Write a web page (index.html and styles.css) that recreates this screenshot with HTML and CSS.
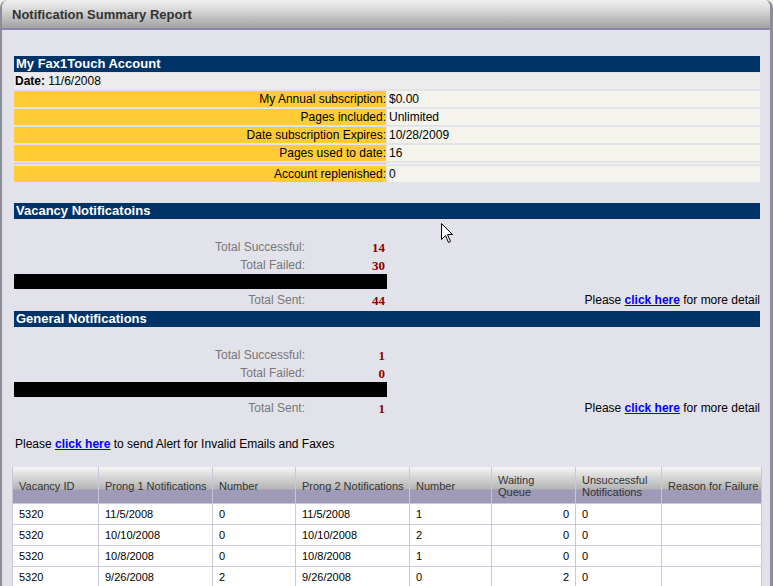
FILE: index.html
```html
<!DOCTYPE html>
<html>
    <head>
        <link rel="stylesheet" href="styles.css">
    </head>
    <body>

    <div class="window">
        <div class="window-title">Notification Summary Report</div>
        <div class="window-body">

            <div class="section-bar">My Fax1Touch Account</div>
            <div class="date-row"><b>Date:</b> 11/6/2008</div>
            <div class="acct">
                <div class="acct-row"><div class="acct-label">My Annual subscription:</div><div class="acct-value">$0.00</div></div>
                <div class="acct-row"><div class="acct-label">Pages included:</div><div class="acct-value">Unlimited</div></div>
                <div class="acct-row"><div class="acct-label">Date subscription Expires:</div><div class="acct-value">10/28/2009</div></div>
                <div class="acct-row"><div class="acct-label">Pages used to date:</div><div class="acct-value">16</div></div>
                <div class="acct-row spacer"><div class="acct-label"></div><div class="acct-value"></div></div>
                <div class="acct-row"><div class="acct-label">Account replenished:</div><div class="acct-value">0</div></div>
            </div>

            <div class="section-bar vacancy">Vacancy Notificatoins</div>
            <div class="stats">
                <div class="stat-row first"><div class="stat-label">Total Successful:</div><div class="stat-num">14</div></div>
                <div class="stat-row"><div class="stat-label">Total Failed:</div><div class="stat-num">30</div></div>
                <div class="stat-rule"></div>
                <div class="stat-row last">
                    <div class="stat-label">Total Sent:</div><div class="stat-num">44</div>
                    <div class="more">Please <a href="#">click here</a> for more detail</div>
                </div>
            </div>

            <div class="section-bar">General Notifications</div>
            <div class="stats">
                <div class="stat-row first"><div class="stat-label">Total Successful:</div><div class="stat-num">1</div></div>
                <div class="stat-row"><div class="stat-label">Total Failed:</div><div class="stat-num">0</div></div>
                <div class="stat-rule"></div>
                <div class="stat-row last">
                    <div class="stat-label">Total Sent:</div><div class="stat-num">1</div>
                    <div class="more">Please <a href="#">click here</a> for more detail</div>
                </div>
            </div>

            <div class="alert-line">Please <a href="#">click here</a> to send Alert for Invalid Emails and Faxes</div>

            <table class="grid">
                <colgroup>
                    <col style="width:86px"><col style="width:114px"><col style="width:83px"><col style="width:114px">
                    <col style="width:82px"><col style="width:84px"><col style="width:86px"><col style="width:100px">
                </colgroup>
                <thead>
                    <tr>
                        <th>Vacancy ID</th>
                        <th>Prong 1 Notifications</th>
                        <th>Number</th>
                        <th>Prong 2 Notifications</th>
                        <th>Number</th>
                        <th>Waiting<br>Queue</th>
                        <th>Unsuccessful<br>Notifications</th>
                        <th>Reason for Failure</th>
                    </tr>
                </thead>
                <tbody>
                    <tr><td>5320</td><td>11/5/2008</td><td>0</td><td>11/5/2008</td><td>1</td><td class="num">0</td><td>0</td><td></td></tr>
                    <tr><td>5320</td><td>10/10/2008</td><td>0</td><td>10/10/2008</td><td>2</td><td class="num">0</td><td>0</td><td></td></tr>
                    <tr><td>5320</td><td>10/8/2008</td><td>0</td><td>10/8/2008</td><td>1</td><td class="num">0</td><td>0</td><td></td></tr>
                    <tr><td>5320</td><td>9/26/2008</td><td>2</td><td>9/26/2008</td><td>0</td><td class="num">2</td><td>0</td><td></td></tr>
                </tbody>
            </table>
        </div>
    </div>

    <svg class="cursor" width="13" height="21" viewBox="0 0 13 21">
        <path d="M0.5 0.5 L0.5 16.5 L4.5 12.5 L7.5 19.5 L9.5 18.5 L6.5 11.5 L11.5 11.5 Z" fill="#fff" stroke="#000" stroke-width="1"/>
    </svg>

    </body>
</html>
```

FILE: styles.css
```css
body {
    margin: 0;
    font-family: "Liberation Sans", Arial, sans-serif;
    font-size: 12px;
    color: #000;
    background: #f0f0f0;
}
.window {
    width: 768px;
    height: 586px;
    overflow: hidden;
    border-left: 2px solid #8d8c98;
    border-right: 3px solid #8d8c98;
    border-radius: 8px 8px 0 0;
    background: #e2e2eb;
}
.window-title {
    height: 28px;
    line-height: 29px;
    padding-left: 10px;
    font-weight: bold;
    font-size: 13px;
    color: #333;
    background: linear-gradient(#f0f0f0, #dcdcdc 30%, #a2a2a2);
    border-bottom: 2px solid #8a86a8;
}
.window-body {
    padding: 26px 10px 0 12px;
}
.section-bar {
    height: 16px;
    line-height: 16px;
    padding-left: 2px;
    background: #003366;
    color: #fff;
    font-weight: bold;
    font-size: 13px;
}
.date-row {
    margin-top: 1px;
    height: 16px;
    line-height: 16px;
    padding-left: 1px;
    background: #ececec;
}
.acct {
    margin-top: 1px;
}
.acct-row {
    display: grid;
    grid-template-columns: 372px 1fr;
    column-gap: 1px;
    height: 16px;
    line-height: 16px;
    margin-top: 2px;
}
.acct-row.spacer {
    height: 1px;
}
.acct-label {
    background: #ffcc33;
    text-align: right;
}
.acct-value {
    background: #f4f3ec;
    padding-left: 2px;
}
.section-bar.vacancy {
    margin-top: 21px;
}
.stats {
    margin-bottom: 2px;
}
.stat-row {
    display: grid;
    grid-template-columns: 291px 80px 1fr;
    height: 18px;
    line-height: 19px;
}
.stat-row.first {
    margin-top: 19px;
}
.stat-row.last {
    margin-top: 2px;
}
.stat-label {
    text-align: right;
    color: #777;
}
.stat-num {
    text-align: right;
    font-family: "Liberation Serif", "Times New Roman", serif;
    font-weight: bold;
    font-size: 13px;
    color: #8b0000;
}
.stat-rule {
    width: 373px;
    height: 15px;
    background: #000;
}
.more {
    text-align: right;
}
a {
    color: #0000ff;
    font-weight: bold;
}
.alert-line {
    margin-top: 19px;
    height: 16px;
    line-height: 16px;
    padding-left: 1px;
}
.grid {
    margin-top: 15px;
    margin-left: -2px;
    width: 749px;
    border-collapse: collapse;
    table-layout: fixed;
    font-size: 11px;
    background: #fff;
}
.grid th {
    height: 35px;
    padding: 0 0 0 6px;
    text-align: left;
    vertical-align: middle;
    font-weight: normal;
    color: #333;
    line-height: 12px;
    background: linear-gradient(#f6f6f6 0, #dcdcdc 8px, #b4b4b4 22px, #9e9ab7 23px, #9e9ab7 100%);
    border-left: 1px solid #c8c5dc;
    border-right: 1px solid #c8c5dc;
    padding-top: 1px;
}
.grid td {
    height: 20px;
    padding: 0 6px;
    border: 1px solid #cbc8dd;
    white-space: nowrap;
}
.grid td.num {
    text-align: right;
}
.cursor {
    position: absolute;
    left: 441px;
    top: 223px;
}
```
